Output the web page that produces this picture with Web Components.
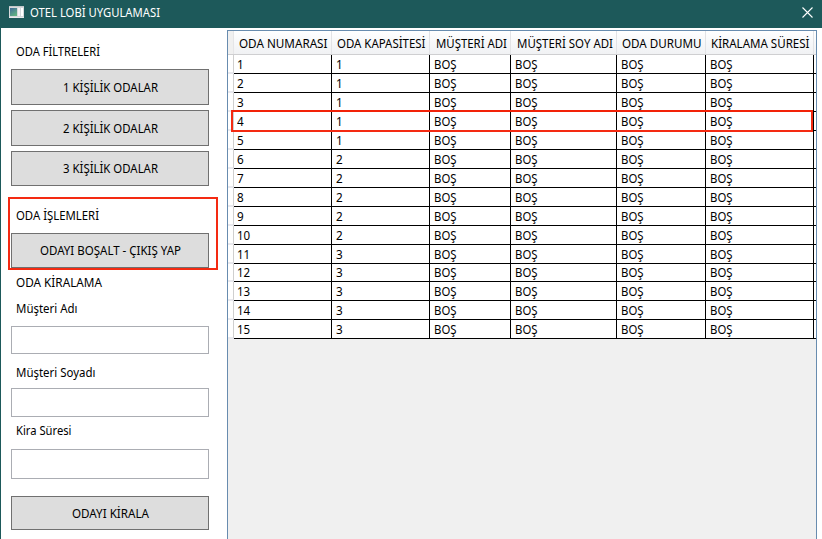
<!DOCTYPE html>
<html lang="tr">
<head>
<meta charset="utf-8">
<title>OTEL LOBİ UYGULAMASI</title>
<style>
html,body{margin:0;height:100%;overflow:hidden}
body{font:12px/16px "Noto Sans","Open Sans",sans-serif;color:#000;background:#fff}
</style>
</head>
<body>
<hotel-window></hotel-window>
<script>
// Single line of text fitted horizontally to the width given in its "w" attribute.
class FitText extends HTMLElement {
  constructor(){
    super();
    this.attachShadow({mode:'open'}).innerHTML = `<style>
      :host{display:block;height:16px;white-space:nowrap;flex:none}
      span{display:inline-block;transform-origin:0 0;line-height:16px;padding-top:1px}
    </style><span><slot></slot></span>`;
  }
  connectedCallback(){
    const w = +this.getAttribute('w');
    this.style.width = w + 'px';
    const s = this.shadowRoot.querySelector('span');
    const natural = s.getBoundingClientRect().width;
    if (natural) s.style.transform = `scaleX(${w / natural})`;
  }
}

class TitleBar extends HTMLElement {
  constructor(){
    super();
    this.attachShadow({mode:'open'}).innerHTML = `<style>
      :host{display:flex;height:28px;background:#1d595a;color:#fff;box-sizing:border-box;padding:0 9px 0 9px}
      .icon{margin:6px 6px 0 0;flex:none}
      fit-text{margin-top:4px}
      .close{margin:7px 0 0 auto;flex:none}
    </style>
    <svg class="icon" width="15" height="12" viewBox="0 0 15 12">
      <defs><linearGradient id="g" x2="0.6" y2="1"><stop stop-color="#41699a"/><stop offset="1" stop-color="#5fb183"/></linearGradient></defs>
      <rect width="15" height="12" fill="#d6d9dc"/><path d="M0 .5H15" stroke="#c3c7cb"/>
      <rect x="1" y="2" width="7" height="8" fill="url(#g)"/>
      <rect x="9" y="2" width="2" height="8" fill="#f2f2f5"/><rect x="12" y="2" width="2" height="8" fill="#fff"/>
      <path d="M0 11.5H15" stroke="#e9ebec"/>
    </svg>
    <fit-text w="130"><slot></slot></fit-text>
    <svg class="close" width="11" height="11" viewBox="0 0 11 11"><path d="M.5.5 10.5 10.5M10.5.5.5 10.5" stroke="#fff" stroke-width="1.1" fill="none"/></svg>`;
  }
}

class PushButton extends HTMLElement {
  constructor(){
    super();
    const w = this.getAttribute('w'), h = this.getAttribute('h'), p = this.getAttribute('pad');
    this.attachShadow({mode:'open'}).innerHTML = `<style>
      :host{display:flex;justify-content:center;box-sizing:border-box;width:198px;height:${h}px;padding-top:${p}px;border:1px solid #707070;background:#ddd}
    </style><fit-text w="${w}"><slot></slot></fit-text>`;
  }
}

class TextField extends HTMLElement {
  constructor(){
    super();
    this.attachShadow({mode:'open'}).innerHTML = `<style>
      :host{display:block;box-sizing:border-box;width:198px;height:${this.getAttribute('h')}px;border:1px solid #abadb3;background:#fff}
    </style>`;
  }
}

class SidePanel extends HTMLElement {
  constructor(){
    super();
    this.attachShadow({mode:'open'}).innerHTML = `<style>
      :host{display:flex;flex-direction:column;position:relative;width:227px;box-sizing:border-box;padding:15px 0 0 10px;border-left:1px solid #1d595a}
      fit-text{margin-left:5px}
      .mark{position:absolute;left:7px;top:169px;width:210px;height:73px;box-sizing:border-box;border:2px solid #f42a12}
    </style>
    <fit-text w="84">ODA FİLTRELERİ</fit-text>
    <push-button w="95" h="36" pad="9" style="margin-top:10px">1 KİŞİLİK ODALAR</push-button>
    <push-button w="95" h="36" pad="9" style="margin-top:5px">2 KİŞİLİK ODALAR</push-button>
    <push-button w="95" h="35" pad="8" style="margin-top:5px">3 KİŞİLİK ODALAR</push-button>
    <fit-text w="83" style="margin-top:21px">ODA İŞLEMLERİ</fit-text>
    <push-button w="141" h="35" pad="8" style="margin-top:10px">ODAYI BOŞALT - ÇIKIŞ YAP</push-button>
    <fit-text w="86" style="margin-top:6px">ODA KİRALAMA</fit-text>
    <fit-text w="61.5" style="margin-top:10px">Müşteri Adı</fit-text>
    <text-field h="28" style="margin-top:10px"></text-field>
    <fit-text w="79.5" style="margin-top:10px">Müşteri Soyadı</fit-text>
    <text-field h="29" style="margin-top:8px"></text-field>
    <fit-text w="55.5" style="margin-top:5px">Kira Süresi</fit-text>
    <text-field h="30" style="margin-top:11px"></text-field>
    <push-button w="77" h="34" pad="8" style="margin-top:17px">ODAYI KİRALA</push-button>
    <div class="mark"></div>`;
  }
}

class RoomGrid extends HTMLElement {
  constructor(){
    super();
    const heads = [['ODA NUMARASI',88.5],['ODA KAPASİTESİ',88.5],['MÜŞTERİ ADI',71],['MÜŞTERİ SOY ADI',96],['ODA DURUMU',79.5],['KİRALAMA SÜRESİ',98.5]];
    let rows = '';
    for (let i = 1; i <= 15; i++) {
      const cells = [i, Math.ceil(i / 5), 'BOŞ', 'BOŞ', 'BOŞ', 'BOŞ'];
      rows += `<div class="row${i === 12 ? ' short' : ''}"><i></i>` +
        cells.map((c, n) => `<div class="cell"><fit-text w="${n > 1 ? 22.5 : i > 9 && n === 0 ? 13.2 : 6.7}">${c}</fit-text></div>`).join('') + '<b></b></div>';
    }
    this.attachShadow({mode:'open'}).innerHTML = `<style>
      :host{display:block;position:relative;box-sizing:border-box;width:590px;height:520px;margin-top:2px;border:1px solid #688caf;background:#f0f0f0}
      .head,.row{display:grid;grid-template-columns:6px 98px 98px 81px 106px 89px 108px 2px}
      .head{height:24px;box-sizing:border-box;background:linear-gradient(#fff,#f7f8fa 48%,#f1f2f4);border-bottom:1px solid #cfcfd1}
      .head div{padding:4px 0 0 5px;box-shadow:inset -1px 0 #e2e3e6}
      .head div:nth-child(4),.head div:nth-child(5){padding-left:5.5px}
      .head i{background:#f0f0f0;box-shadow:inset -1px 0 #e5e5e7}
      .row{height:19px;background:#fff}
      .short{height:18px}
      .row i{border-right:1px solid #cfcfcf;border-bottom:2px solid #e9e9ee}
      .cell{border-right:1px solid #000;border-bottom:1px solid #000;padding:1px 0 0 3.6px;box-sizing:border-box}
      .row i + .cell{padding-left:3px}
      .short .cell{padding-top:0}
      .row b{border-bottom:1px solid #000}
      .mark{position:absolute;left:3px;top:79px;width:582px;height:22px;box-sizing:border-box;border:2px solid #f42a12;border-top-color:#f22208}
    </style>
    <div class="head"><i></i>${heads.map(([t, w]) => `<div><fit-text w="${w}">${t}</fit-text></div>`).join('')}<b></b></div>
    ${rows}<div class="mark"></div>`;
  }
}

class HotelWindow extends HTMLElement {
  constructor(){
    super();
    this.attachShadow({mode:'open'}).innerHTML = `<style>
      :host{display:flex;flex-direction:column;width:822px;height:539px;overflow:hidden;background:#fff}
      main{display:flex;height:511px}
    </style>
    <title-bar>OTEL LOBİ UYGULAMASI</title-bar>
    <main><side-panel></side-panel><room-grid></room-grid></main>`;
  }
}
customElements.define('fit-text', FitText);
customElements.define('title-bar', TitleBar);
customElements.define('push-button', PushButton);
customElements.define('text-field', TextField);
customElements.define('side-panel', SidePanel);
customElements.define('room-grid', RoomGrid);
customElements.define('hotel-window', HotelWindow);
</script>
</body>
</html>
